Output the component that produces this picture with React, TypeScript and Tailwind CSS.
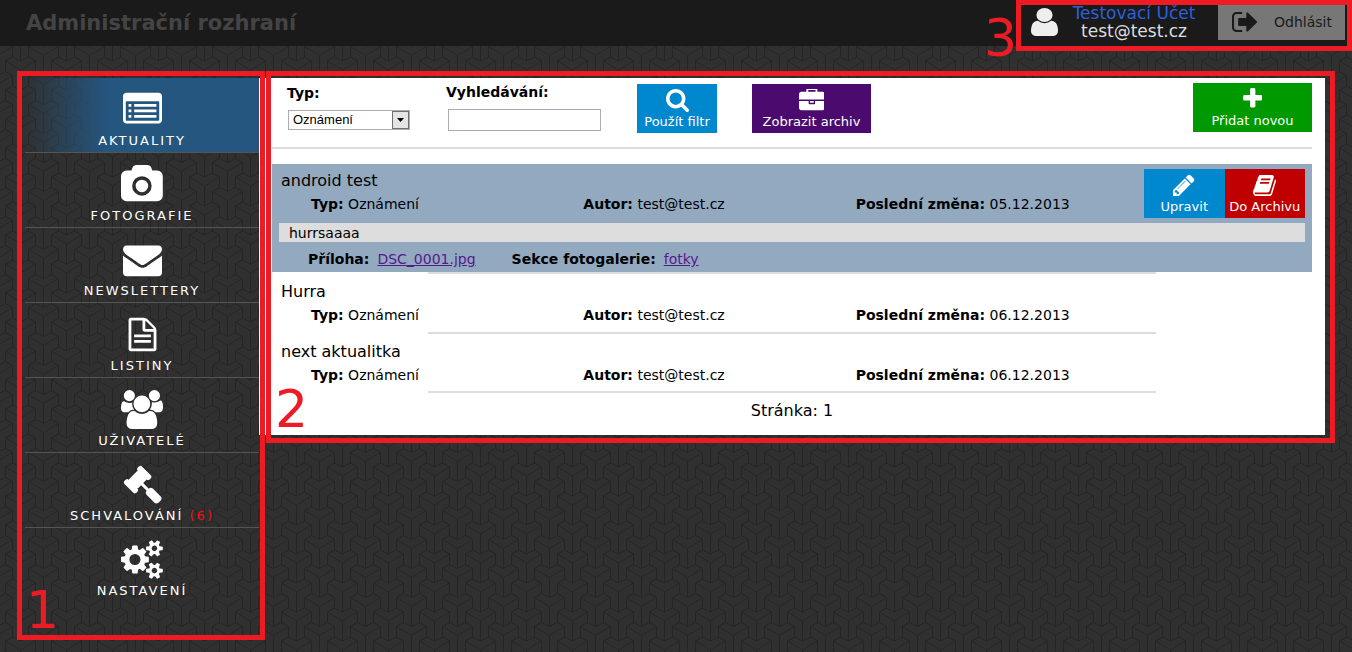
import React from 'react';

type Icon = { box: string; d: string };

const icons: Record<string, Icon> = {
    news: {
        box: '0 0 1792 1792',
        d: 'M160 128h1472q66 0 113 47t47 113v1088q0 66-47 113t-113 47h-1472q-66 0-113-47t-47-113v-1088q0-66 47-113t113-47zM160 512q-32 0-32 32v832q0 32 32 32h1472q32 0 32-32v-832q0-32-32-32zM256 640h128v128h-128zM512 640h1024v128h-1024zM256 896h128v128h-128zM512 896h1024v128h-1024zM256 1152h128v128h-128zM512 1152h1024v128h-1024z',
    },
    camera: {
        box: '0 0 1920 1792',
        d: 'M960 672q119 0 203.5 84.5t84.5 203.5-84.5 203.5-203.5 84.5-203.5-84.5-84.5-203.5 84.5-203.5 203.5-84.5zm704-416q106 0 181 75t75 181v896q0 106-75 181t-181 75h-1408q-106 0-181-75t-75-181v-896q0-106 75-181t181-75h224l51-136q19-49 69.5-84.5t103.5-35.5h512q53 0 103.5 35.5t69.5 84.5l51 136h224zm-704 1152q185 0 316.5-131.5t131.5-316.5-131.5-316.5-316.5-131.5-316.5 131.5-131.5 316.5 131.5 316.5 316.5 131.5z',
    },
    envelope: {
        box: '0 0 1792 1792',
        d: 'M1792 710v794q0 66-47 113t-113 47h-1472q-66 0-113-47t-47-113v-794q44 49 101 87 362 246 497 345 57 42 92.5 65.5t94.5 48 110 24.5h2q51 0 110-24.5t94.5-48 92.5-65.5q170-123 498-345 57-39 100-87zm0-294q0 79-49 151t-122 123q-376 261-468 325-10 7-42.5 31t-54 38.5-52 32.5-57.5 27-50 9h-2q-23 0-50-9t-57.5-27-52-32.5-54-38.5-42.5-31q-91-64-262-182.5t-205-142.5q-62-42-117-115.5t-55-136.5q0-78 41.5-130t118.5-52h1472q65 0 112.5 47t47.5 113z',
    },
    file: {
        box: '0 0 1792 1792',
        d: 'M1468 540q28 28 48 76t20 88v864q0 40-28 68t-68 28h-1088q-40 0-68-28t-28-68v-1344q0-40 28-68t68-28h608q40 0 88 20t76 48zM1024 264v376h376q-10-29-22-41l-313-313q-12-12-41-22zM1408 1536v-768h-416q-40 0-68-28t-28-68v-416h-512v1280zM512 896h768v128h-768zM512 1152h768v128h-768z',
    },
    users: {
        box: '0 0 1920 1792',
        d: 'M593 896q-162 5-265 128h-134q-82 0-138-40.5t-56-118.5q0-353 124-353 6 0 43.5 21t97.5 42.5 119 21.5q67 0 133-23-5 37-5 66 0 159 93 283zm1071 637q0 120-73 189.5t-194 69.5h-874q-121 0-194-69.5t-73-189.5q0-53 3.5-103.5t14-109 26.5-108.5 43-97.5 62-81 85.5-53.5 111.5-20q10 0 43 21.5t73 48 107 48 135 21.5 135-21.5 107-48 73-48 43-21.5q61 0 111.5 20t85.5 53.5 62 81 43 97.5 26.5 108.5 14 109 3.5 103.5zm-1024-1277q0 106-75 181t-181 75-181-75-75-181 75-181 181-75 181 75 75 181zm704 384q0 159-112.5 271.5t-271.5 112.5-271.5-112.5-112.5-271.5 112.5-271.5 271.5-112.5 271.5 112.5 112.5 271.5zm576 225q0 78-56 118.5t-138 40.5h-134q-103-123-265-128 93-124 93-283 0-29-5-66 66 23 133 23 59 0 119-21.5t97.5-42.5 43.5-21q124 0 124 353zm-128-609q0 106-75 181t-181 75-181-75-75-181 75-181 181-75 181 75 75 181z',
    },
    gavel: {
        box: '0 0 1792 1792',
        d: 'M1771 1536q0 53-37 90l-107 108q-39 37-91 37-53 0-90-37l-363-364q-38-36-38-90 0-53 43-96l-256-256-126 126q-14 14-34 14t-34-14q2 2 12.5 12t12.5 13 10 11.5 10 13.5 6 13.5 5.5 16.5 1.5 18q0 38-28 68-3 3-16.5 18t-19 20.5-18.5 16.5-22 15.5-22 9-26 4.5q-40 0-68-28l-408-408q-28-28-28-68 0-13 4.5-26t9-22 15.5-22 16.5-18.5 20.5-19 18-16.5q30-28 68-28 10 0 18 1.5t16.5 5.5 13.5 6 13.5 10 11.5 10 13 12.5 12 12.5q-14-14-14-34t14-34l348-348q14-14 34-14t34 14q-2-2-12.5-12t-12.5-13-10-11.5-10-13.5-6-13.5-5.5-16.5-1.5-18q0-38 28-68 3-3 16.5-18t19-20.5 18.5-16.5 22-15.5 22-9 26-4.5q40 0 68 28l408 408q28 28 28 68 0 13-4.5 26t-9 22-15.5 22-16.5 18.5-20.5 19-18 16.5q-30 28-68 28-10 0-18-1.5t-16.5-5.5-13.5-6-13.5-10-11.5-10-13-12.5-12-12.5q14 14 14 34t-14 34l-126 126 256 256q43-43 96-43 52 0 91 37l363 363q37 39 37 91z',
    },
    cogs: {
        box: '0 0 1920 1792',
        d: 'M896 896q0-106-75-181t-181-75-181 75-75 181 75 181 181 75 181-75 75-181zm768 512q0-52-38-90t-90-38-90 38-38 90q0 53 37.5 90.5t90.5 37.5 90.5-37.5 37.5-90.5zm0-1024q0-52-38-90t-90-38-90 38-38 90q0 53 37.5 90.5t90.5 37.5 90.5-37.5 37.5-90.5zm-384 421v185q0 10-7 19.5t-16 10.5l-155 24q-11 35-32 76 34 48 90 115 7 11 7 20 0 12-7 19-23 30-82.5 89.5t-78.5 59.5q-11 0-21-7l-115-90q-37 19-77 31-11 108-23 155-7 24-30 24h-186q-11 0-20-7.5t-10-17.5l-23-153q-34-10-75-31l-118 89q-7 7-20 7-11 0-21-8-144-133-144-160 0-9 7-19 10-14 41-53t47-61q-23-44-35-82l-152-24q-10-1-17-9.5t-7-19.5v-185q0-10 7-19.5t16-10.5l155-24q11-35 32-76-34-48-90-115-7-11-7-20 0-12 7-20 22-30 82-89t79-59q11 0 21 7l115 90q34-18 77-32 11-108 23-154 7-24 30-24h186q11 0 20 7.5t10 17.5l23 153q34 10 75 31l118-89q8-7 20-7 11 0 21 8 144 133 144 160 0 8-7 19-12 16-42 54t-45 60q23 48 34 82l152 23q10 2 17 10.5t7 19.5zm640 533v140q0 16-149 31-12 27-30 52 51 113 51 138 0 4-4 7-122 71-124 71-8 0-46-47t-52-68q-20 2-30 2t-30-2q-14 21-52 68t-46 47q-2 0-124-71-4-3-4-7 0-25 51-138-18-25-30-52-149-15-149-31v-140q0-16 149-31 13-29 30-52-51-113-51-138 0-4 4-7 4-2 35-20t59-34 30-16q8 0 46 46.5t52 67.5q20-2 30-2t30 2q51-71 92-112l6-2q4 0 124 70 4 3 4 7 0 25-51 138 17 23 30 52 149 15 149 31zm0-1024v140q0 16-149 31-12 27-30 52 51 113 51 138 0 4-4 7-122 71-124 71-8 0-46-47t-52-68q-20 2-30 2t-30-2q-14 21-52 68t-46 47q-2 0-124-71-4-3-4-7 0-25 51-138-18-25-30-52-149-15-149-31v-140q0-16 149-31 13-29 30-52-51-113-51-138 0-4 4-7 4-2 35-20t59-34 30-16q8 0 46 46.5t52 67.5q20-2 30-2t30 2q51-71 92-112l6-2q4 0 124 70 4 3 4 7 0 25-51 138 17 23 30 52 149 15 149 31z',
    },
    search: {
        box: '64 128 1664 1664',
        d: 'M1216 832q0-185-131.5-316.5t-316.5-131.5-316.5 131.5-131.5 316.5 131.5 316.5 316.5 131.5 316.5-131.5 131.5-316.5zm512 832q0 52-38 90t-90 38q-54 0-90-38l-343-342q-179 124-399 124-143 0-273.5-55.5t-225-150-150-225-55.5-273.5 55.5-273.5 150-225 225-150 273.5-55.5 273.5 55.5 225 150 150 225 55.5 273.5q0 220-124 399l343 343q37 37 37 90z',
    },
    briefcase: {
        box: '0 64 1792 1600',
        d: 'M640 256h512v-128h-512v128zm1152 640v480q0 66-47 113t-113 47h-1472q-66 0-113-47t-47-113v-480h672v160q0 26 19 45t45 19h320q26 0 45-19t19-45v-160h672zm-768 0v128h-256v-128h256zm768-480v384h-1792v-384q0-66 47-113t113-47h352v-160q0-40 28-68t68-28h576q40 0 68 28t28 68v160h352q66 0 113 47t47 113z',
    },
    plus: {
        box: '192 128 1408 1664',
        d: 'M1600 736v192q0 40-28 68t-68 28h-416v416q0 40-28 68t-68 28h-192q-40 0-68-28t-28-68v-416h-416q-40 0-68-28t-28-68v-192q0-40 28-68t68-28h416v-416q0-40 28-68t68-28h192q40 0 68 28t28 68v416h416q40 0 68 28t28 68z',
    },
    pencil: {
        box: '128 96 1536 1632',
        d: 'M491 1536l91-91-235-235-91 91v107h128v128h107zm523-928q0-22-22-22-10 0-17 7l-542 542q-7 7-7 17 0 22 22 22 10 0 17-7l542-542q7-7 7-17zm-54-192l416 416-832 832h-416v-416zm683 96q0 53-37 90l-166 166-416-416 166-165q36-38 90-38 53 0 91 38l235 234q37 39 37 91z',
    },
    book: {
        box: '64 64 1664 1664',
        d: 'M1703 478q40 57 18 129l-275 906q-19 64-76.5 107.5t-122.5 43.5h-923q-77 0-148.5-53.5t-99.5-131.5q-24-67-2-127 0-4 3-27t4-37q1-8-3-21.5t-3-19.5q2-11 8-21t16.5-23.5 16.5-23.5q23-38 45-91.5t30-91.5q3-10 .5-30t-.5-28q3-11 17-28t17-23q21-36 42-92t25-90q1-9-2.5-32t.5-28q4-13 22-30.5t22-22.5q19-26 42.5-84.5t27.5-96.5q1-8-3-25.5t-2-26.5q2-8 9-18t18-23 17-21q8-12 16.5-30.5t15-35 16-36 19.5-32 26.5-23.5 36-11.5 47.5 5.5l-1 3q38-9 51-9h761q74 0 114 56t18 130l-274 906q-36 119-71.5 153.5t-128.5 34.5h-869q-27 0-38 15-11 16-1 43 24 70 144 70h923q29 0 56-15.5t35-41.5l300-987q7-22 5-57 38 15 59 43zm-1064 2q-4 13 2 22.5t20 9.5h608q13 0 25.5-9.5t16.5-22.5l21-64q4-13-2-22.5t-20-9.5h-608q-13 0-25.5 9.5t-16.5 22.5zm-83 256q-4 13 2 22.5t20 9.5h608q13 0 25.5-9.5t16.5-22.5l21-64q4-13-2-22.5t-20-9.5h-608q-13 0-25.5 9.5t-16.5 22.5z',
    },
    user: {
        box: '256 128 1280 1536',
        d: 'M1536 1399q0 109-62.5 187t-150.5 78h-854q-88 0-150.5-78t-62.5-187q0-85 8.5-160.5t31.5-152 58.5-131 94-89 134.5-34.5q131 128 313 128t313-128q76 0 134.5 34.5t94 89 58.5 131 31.5 152 8.5 160.5zm-256-887q0 159-112.5 271.5t-271.5 112.5-271.5-112.5-112.5-271.5 112.5-271.5 271.5-112.5 271.5 112.5 112.5 271.5z',
    },
    signOut: {
        box: '64 256 1568 1280',
        d: 'M704 1440q0 4 1 20t.5 26.5-3 23.5-10 19.5-20.5 6.5h-320q-119 0-203.5-84.5t-84.5-203.5v-704q0-119 84.5-203.5t203.5-84.5h320q13 0 22.5 9.5t9.5 22.5q0 4 1 20t.5 26.5-3 23.5-10 19.5-20.5 6.5h-320q-66 0-113 47t-47 113v704q0 66 47 113t113 47h312l11.5 1 11.5 3 8 5.5 7 9 2 13.5zm928-544q0 26-19 45l-544 544q-19 19-45 19t-45-19-19-45v-288h-448q-26 0-45-19t-19-45v-384q0-26 19-45t45-19h448v-288q0-26 19-45t45-19 45 19l544 544q19 19 19 45z',
    },
};

const evenOdd = ['news', 'file'];

function Icon({ name, className }: { name: string; className: string }) {
    return (
        <svg
            className={className}
            viewBox={icons[name].box}
            preserveAspectRatio="none"
            fill="currentColor"
            fillRule={evenOdd.includes(name) ? 'evenodd' : 'nonzero'}
            aria-hidden="true"
        >
            <path d={icons[name].d} />
        </svg>
    );
}

const tripod =
    'M-15-9L0 0L15-9M0 0V20M-15-9L-8-13L0-9L8-13L15-9V1.500L8 5.500V16M-15-9V1.500L-8 5.500V16';

function Background() {
    return (
        <svg className="absolute inset-0 h-full w-full" aria-hidden="true">
            <defs>
                <pattern id="tripods" width="46" height="29" patternUnits="userSpaceOnUse">
                    <g fill="none" stroke="#252525" strokeWidth="1">
                        <path d={tripod} transform="translate(20.500 -17)" />
                        <path d={tripod} transform="translate(20.500 12)" />
                        <path d={tripod} transform="translate(20.500 41)" />
                        <path d={tripod} transform="translate(-2.500 -2.500)" />
                        <path d={tripod} transform="translate(-2.500 26.500)" />
                        <path d={tripod} transform="translate(43.500 -2.500)" />
                        <path d={tripod} transform="translate(43.500 26.500)" />
                    </g>
                </pattern>
            </defs>
            <rect width="100%" height="100%" fill="url(#tripods)" />
        </svg>
    );
}

const menu = [
    { icon: 'news', label: 'AKTUALITY', active: true },
    { icon: 'camera', label: 'FOTOGRAFIE' },
    { icon: 'envelope', label: 'NEWSLETTERY' },
    { icon: 'file', label: 'LISTINY' },
    { icon: 'users', label: 'UŽIVATELÉ' },
    { icon: 'gavel', label: 'SCHVALOVÁNÍ', count: 6 },
    { icon: 'cogs', label: 'NASTAVENÍ' },
];

function Sidebar() {
    return (
        <nav className="relative w-[234px] shrink-0 pb-8">
            {menu.map((item) => (
                <a
                    key={item.label}
                    href="#"
                    className={
                        'flex h-[75px] flex-col items-center border-b border-[#555] pt-3 text-white last-of-type:border-b-0 ' +
                        (item.active
                            ? 'bg-linear-to-r from-transparent to-[#25567f] to-35%'
                            : '')
                    }
                >
                    <Icon name={item.icon} className="h-[39px] w-auto" />
                    <span className="mt-[2px] text-[13px] leading-5 tracking-[2px]">
                        {item.label}
                        {item.count && <span className="text-[#f01010]"> ({item.count})</span>}
                    </span>
                </a>
            ))}
            <div className="pointer-events-none absolute -top-[7px] -right-[6px] bottom-[-5px] -left-2 z-10 border-5 border-[#ed1c24]">
                <Mark className="bottom-0 left-1">1</Mark>
            </div>
        </nav>
    );
}

function Mark({ className, children }: { className: string; children: React.ReactNode }) {
    return (
        <span className={'absolute text-[52px] leading-[50px] text-[#ed1c24] ' + className}>
            {children}
        </span>
    );
}

function ActionButton({ icon, color, children }: { icon: string; color: string; children: string }) {
    return (
        <button
            type="button"
            className={'flex h-[49px] flex-col items-center pt-[5px] text-[13px] text-white ' + color}
        >
            <Icon name={icon} className="h-[23px] w-auto" />
            <span className="leading-[19px] whitespace-nowrap">{children}</span>
        </button>
    );
}

function Filter() {
    return (
        <form className="flex items-start border-b-2 border-[#ddd] pt-[5px] pb-[15px]">
            <div className="ml-[15px] w-[123px]">
                <label htmlFor="typ" className="block text-sm leading-5 font-bold">
                    Typ:
                </label>
                <div className="relative mt-[7px] ml-px flex h-5">
                    <select
                        id="typ"
                        className="h-5 w-full appearance-none rounded-none border border-[#abadb3] bg-white pl-1 font-['Liberation_Sans',sans-serif] text-[13px] leading-4"
                    >
                        <option>Oznámení</option>
                    </select>
                    <span className="pointer-events-none absolute top-px right-px flex h-[18px] w-[17px] items-center justify-center border border-[#707070] bg-[#e4e4e4]">
                        <svg className="h-1 w-[7px]" viewBox="0 0 7 4">
                            <path d="M0 0h7L3.500 4z" />
                        </svg>
                    </span>
                </div>
            </div>
            <div className="ml-9 w-[155px]">
                <label htmlFor="hledat" className="block text-sm leading-[18px] font-bold">
                    Vyhledávání:
                </label>
                <input
                    id="hledat"
                    type="text"
                    className="mt-2 ml-[2px] block h-[22px] w-[153px] border border-[#abadb3] bg-white px-1 text-[13px]"
                />
            </div>
            <div className="mt-px -mb-px ml-9 grid w-20">
                <ActionButton icon="search" color="bg-[#0088cf]">Použít filtr</ActionButton>
            </div>
            <div className="mt-px -mb-px ml-[35px] grid w-[119px]">
                <ActionButton icon="briefcase" color="bg-[#4b0a6e]">Zobrazit archiv</ActionButton>
            </div>
            <div className="ml-auto grid w-[119px]">
                <ActionButton icon="plus" color="bg-[#009a00]">Přidat novou</ActionButton>
            </div>
        </form>
    );
}

function Field({ name, value }: { name: string; value: string }) {
    return (
        <p>
            <b>{name}:</b> {value}
        </p>
    );
}

function Heading({ title, date, children }: { title: string; date: string; children?: React.ReactNode }) {
    return (
        <div className="flex pr-[7px]">
            <div className="flex-1 pb-[2px]">
                <h2 className="pl-[9px] text-base leading-6">{title}</h2>
                <div className="grid grid-cols-3 pr-4 pl-[39px] text-sm leading-[22px]">
                    <Field name="Typ" value="Oznámení" />
                    <Field name="Autor" value="test@test.cz" />
                    <Field name="Poslední změna" value={date} />
                </div>
            </div>
            <div className="grid w-[161px] grid-cols-2">{children}</div>
        </div>
    );
}

function News() {
    return (
        <section>
            <article className="mt-[15px] bg-[#92a9c0] pt-[5px] text-sm">
                <Heading title="android test" date="05.12.2013">
                    <ActionButton icon="pencil" color="bg-[#0088cf]">Upravit</ActionButton>
                    <ActionButton icon="book" color="bg-[#c00000]">Do Archivu</ActionButton>
                </Heading>
                <p className="mx-[7px] mt-[5px] bg-[#ddd] pt-px pl-[10px] leading-[18px]">hurrsaaaa</p>
                <div className="flex pt-1 pl-9 leading-[26px]">
                    <b>Příloha:</b>
                    <a href="#" className="ml-2 text-[#551a8b] underline">DSC_0001.jpg</a>
                    <b className="ml-9">Sekce fotogalerie:</b>
                    <a href="#" className="ml-2 text-[#551a8b] underline">fotky</a>
                </div>
            </article>
            <hr className="mx-auto w-[70%] border-t-2 border-[#ddd]" />
            <article className="pt-[6px] pb-1">
                <Heading title="Hurra" date="06.12.2013" />
            </article>
            <hr className="mx-auto w-[70%] border-t-2 border-[#ddd]" />
            <article className="pt-[6px] pb-[3px]">
                <Heading title="next aktualitka" date="06.12.2013" />
            </article>
            <hr className="mx-auto w-[70%] border-t-2 border-[#ddd]" />
            <p className="pt-[7px] pb-[13px] text-center text-base leading-[22px]">Stránka: 1</p>
        </section>
    );
}

export default function App() {
    return (
        <div className="relative min-h-screen bg-[#303030] font-['DejaVu_Sans',Verdana,sans-serif] text-black">
            <Background />
            <header className="relative flex h-[46px] justify-between bg-[#1a1a1a]">
                <h1 className="pl-[26px] text-[21px] leading-[46px] font-bold text-[#444]">
                    Administrační rozhraní
                </h1>
                <div className="relative flex h-[46px] items-start pr-[7px] pl-[15px]">
                    <Icon name="user" className="mt-2 h-7 w-[27px] text-[#eee]" />
                    <div className="w-[152px] pt-1 text-center text-[17px] leading-[18px] text-[#ddd]">
                        <p className="text-[#2f5fd8]">Testovací Účet</p>
                        <p>test@test.cz</p>
                    </div>
                    <button
                        type="button"
                        className="ml-2 flex h-10 w-[127px] items-center bg-[#777] pt-1 pl-[14px] text-sm text-[#1a1a1a]"
                    >
                        <Icon name="signOut" className="h-5 w-[25px]" />
                        <span className="ml-[17px]">Odhlásit</span>
                    </button>
                    <div className="pointer-events-none absolute inset-x-0 top-0 -bottom-[5px] z-10 border-5 border-[#ed1c24]">
                        <Mark className="top-[8px] right-full mr-1">3</Mark>
                    </div>
                </div>
            </header>
            <main className="relative flex items-start pt-8 pr-[27px] pl-[25px]">
                <Sidebar />
                <div className="relative min-w-0 flex-1 bg-white px-[13px]">
                    <Filter />
                    <News />
                    <div className="pointer-events-none absolute -top-[7px] -right-[10px] -bottom-2 left-[7px] z-10 border-5 border-[#ed1c24]">
                        <Mark className="bottom-1 left-1">2</Mark>
                    </div>
                </div>
            </main>
        </div>
    );
}
